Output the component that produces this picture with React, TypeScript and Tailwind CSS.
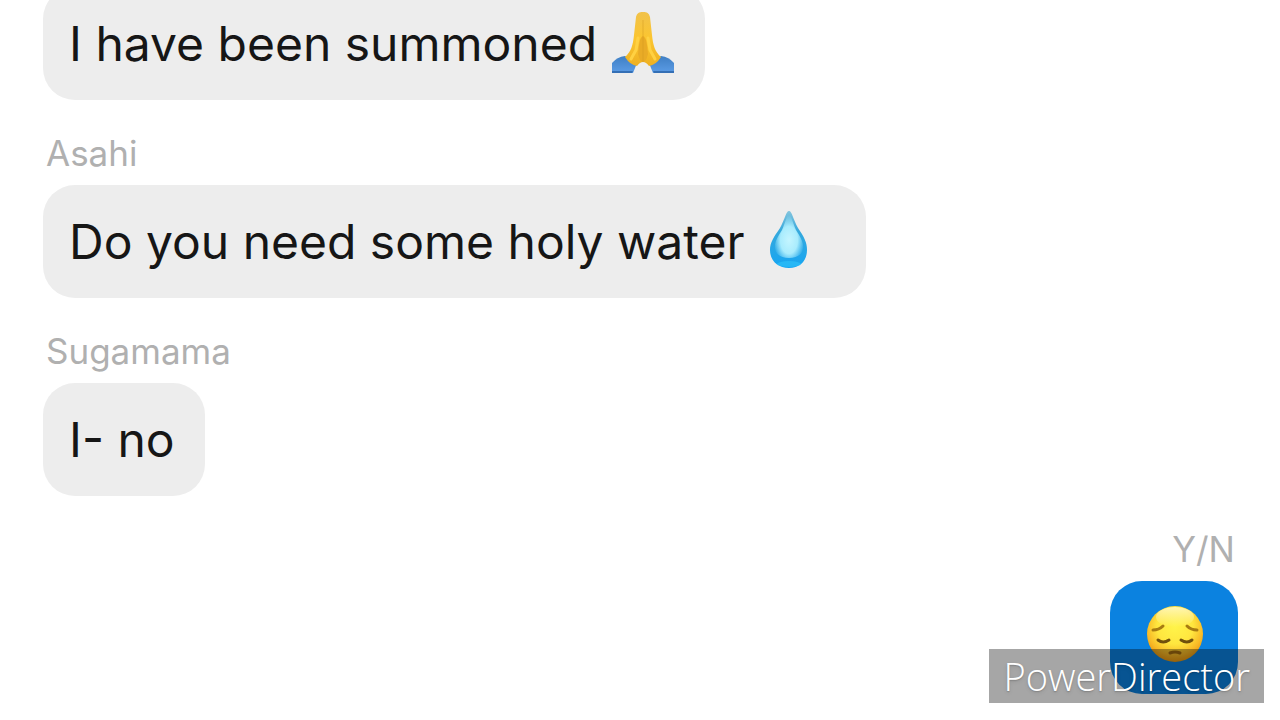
import type { ReactNode } from "react";

interface MessageProps {
  sender?: string;
  own?: boolean;
  children: ReactNode;
}

function FoldedHands() {
  return (
    <svg role="img" aria-label="Folded hands" viewBox="0 0 64 64" className="size-16 shrink-0">
      <defs>
        <linearGradient id="skin" x1="0" y1="0" x2="0" y2="1">
          <stop offset="0" stopColor="#f1c24a" />
          <stop offset="0.5" stopColor="#fbc52f" />
          <stop offset="1" stopColor="#eeb022" />
        </linearGradient>
        <linearGradient id="sleeve" x1="0" y1="0" x2="0" y2="1">
          <stop offset="0" stopColor="#3f7fc4" />
          <stop offset="1" stopColor="#5b9ce6" />
        </linearGradient>
      </defs>
      <path d="M1 51 Q6 45 14 44 L26 51 L22 61 H1 Z" fill="url(#sleeve)" />
      <path d="M63 51 Q58 45 50 44 L38 51 L42 61 H63 Z" fill="url(#sleeve)" />
      <path d="M1 59 H22 L21 61 H1 Z M42 59 H63 V61 H43 Z" fill="#346fb5" />
      <path
        d="M32 0 C28 0 26 1 25 5 L23 23 C22 33 20 40 14 45 Q19 53 26 54 Q29 50 32 50 Q35 50 38 54 Q45 53 50 45 C44 40 42 33 41 23 L39 5 C38 1 36 0 32 0 Z"
        fill="url(#skin)"
      />
      <path d="M32 24 Q29 25 28 33 L27 42 Q29 50 32 50 Q35 50 37 42 L36 33 Q35 25 32 24 Z" fill="#e9ab26" />
      <path d="M27 26 L25 38 L20 47 M37 26 L39 38 L44 47" fill="none" stroke="#ffd142" strokeWidth="3" strokeLinecap="round" />
      <path d="M32 8 V50" stroke="#d39a22" strokeWidth="1" opacity="0.5" />
    </svg>
  );
}

function Droplet() {
  return (
    <svg role="img" aria-label="Droplet" viewBox="0 0 64 64" className="size-16 shrink-0">
      <defs>
        <linearGradient id="water" x1="0" y1="0" x2="0" y2="1">
          <stop offset="0" stopColor="#83c4dd" />
          <stop offset="0.35" stopColor="#36a9dc" />
          <stop offset="1" stopColor="#16a5f2" />
        </linearGradient>
        <radialGradient id="shine" cx="0.5" cy="0.6" r="0.55">
          <stop offset="0" stopColor="#c4f5ff" />
          <stop offset="0.55" stopColor="#a9ecfd" />
          <stop offset="1" stopColor="#a9ecfd" stopOpacity="0" />
        </radialGradient>
      </defs>
      <path d="M31 1 C28 1 27 9 22 18 C16 27 12 32 12 40 C12 51 20 58 31 58 C42 58 49 51 49 40 C49 32 46 27 40 18 C35 9 34 1 31 1 Z" fill="url(#water)" />
      <path d="M31 3 C29 6 27 13 24 20 C19 28 16 33 17 39 C18 45 24 48 31 48 C38 48 44 45 45 39 C46 33 43 28 38 20 C35 13 33 6 31 3 Z" fill="url(#shine)" />
      <ellipse cx="31" cy="54" rx="12" ry="3" fill="#35cafb" opacity="0.5" />
    </svg>
  );
}

function PensiveFace() {
  return (
    <svg role="img" aria-label="Pensive face" viewBox="0 0 64 64" className="size-16 shrink-0">
      <defs>
        <radialGradient id="face" cx="0.5" cy="0.36" r="0.64">
          <stop offset="0" stopColor="#fff44a" />
          <stop offset="0.5" stopColor="#ffe63f" />
          <stop offset="0.8" stopColor="#f8b926" />
          <stop offset="1" stopColor="#e8950f" />
        </radialGradient>
        <linearGradient id="gloss" x1="0" y1="0" x2="0" y2="1">
          <stop offset="0" stopColor="#fffbd0" stopOpacity="0.8" />
          <stop offset="1" stopColor="#fffbd0" stopOpacity="0" />
        </linearGradient>
      </defs>
      <circle cx="33" cy="28" r="28" fill="url(#face)" />
      <ellipse cx="33" cy="11" rx="19" ry="10" fill="url(#gloss)" />
      <g fill="none" strokeLinecap="round">
        <path d="M11 24 Q17 24 21 20 M55 24 Q49 24 45 20" stroke="#a77b12" strokeWidth="3" />
        <path d="M16 34 Q21 38 27 34 M50 34 Q45 38 39 34" stroke="#70500d" strokeWidth="3" />
        <path d="M28 47 Q33 45 38 47" stroke="#a06a10" strokeWidth="3" />
      </g>
    </svg>
  );
}

function Message({ sender, own = false, children }: MessageProps) {
  return (
    <article className={`flex shrink-0 flex-col ${own ? "items-end" : "items-start"}`}>
      {sender && <h2 className="px-[3px] pb-3 text-[35px] leading-10 font-normal text-[#b0b0b0]">{sender}</h2>}
      <div
        className={`flex min-h-[113px] items-center rounded-[32px] whitespace-pre ${
          own ? "bg-[#0b82e0] px-8" : "bg-[#ededed] pr-[30px] pl-[26px] text-[#161616]"
        }`}
      >
        {children}
      </div>
    </article>
  );
}

export default function App() {
  return (
    <main className="relative flex h-screen flex-col justify-end gap-[33px] overflow-hidden bg-white pr-[42px] pb-[26px] pl-[43px] font-[Inter,sans-serif] text-[48px] leading-[60px]">
      <Message>
        <span>I have been summoned </span>
        <FoldedHands />
      </Message>
      <Message sender="Asahi">
        <span>Do you need some holy water </span>
        <Droplet />
        <span> </span>
      </Message>
      <Message sender="Sugamama">
        <span>I- no</span>
      </Message>
      <Message sender="Y/N" own>
        <PensiveFace />
      </Message>

      {/* Video editor watermark */}
      <div className="absolute right-4 bottom-[17px] flex h-[54px] items-center bg-black/35 px-[14px] font-['Open_Sans',sans-serif] text-[38px] font-light text-white text-shadow-md">
        PowerDirector
      </div>
    </main>
  );
}
